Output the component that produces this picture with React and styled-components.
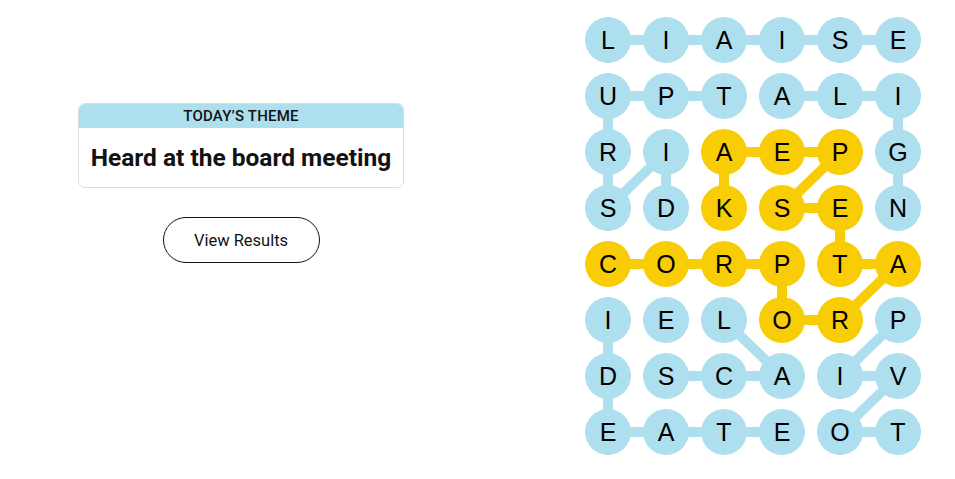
import styled, { createGlobalStyle } from "styled-components";

const GlobalStyle = createGlobalStyle`
  html, body {
    margin: 0;
    padding: 0;
    background: #ffffff;
  }
  body {
    font-family: "Liberation Sans", Arial, sans-serif;
    color: #121212;
  }
`;

const BLUE = "#aedfee";
const YELLOW = "#f9cd05";
const CELL = 46;
const COL_GAP = 12;
const ROW_GAP = 10;

const board = [
  "LIAISE",
  "UPTALI",
  "RIAEPG",
  "SDKSEN",
  "CORPTA",
  "IELORP",
  "DSCAIV",
  "EATEOT",
];

// cells found as part of the spangram
const found = new Set(["2-2", "2-3", "2-4", "3-2", "3-3", "3-4", "4-0", "4-1", "4-2", "4-3", "4-4", "4-5", "5-3", "5-4"]);

// [r1, c1, r2, c2]
const links = [
  [0, 0, 0, 1], [0, 1, 0, 2], [0, 2, 0, 3], [0, 3, 0, 4], [0, 4, 0, 5],
  [1, 0, 1, 1], [1, 1, 1, 2], [1, 3, 1, 4], [1, 4, 1, 5],
  [1, 0, 2, 0], [2, 0, 3, 0], [3, 0, 2, 1], [2, 1, 3, 1],
  [1, 5, 2, 5], [2, 5, 3, 5],
  [2, 2, 2, 3], [2, 3, 2, 4], [2, 2, 3, 2], [2, 4, 3, 3], [3, 3, 3, 4], [3, 4, 4, 4],
  [4, 0, 4, 1], [4, 1, 4, 2], [4, 2, 4, 3], [4, 4, 4, 5],
  [4, 3, 5, 3], [5, 3, 5, 4], [5, 4, 4, 5],
  [5, 0, 6, 0], [6, 0, 7, 0], [7, 0, 7, 1], [7, 1, 7, 2], [7, 2, 7, 3],
  [5, 2, 6, 3], [6, 1, 6, 2], [6, 2, 6, 3],
  [5, 5, 6, 4], [6, 4, 6, 5], [6, 5, 7, 4], [7, 4, 7, 5],
];

const cx = (c) => c * (CELL + COL_GAP) + CELL / 2;
const cy = (r) => r * (CELL + ROW_GAP) + CELL / 2;

const BOARD_W = 6 * CELL + 5 * COL_GAP;
const BOARD_H = 8 * CELL + 7 * ROW_GAP;

export default function App() {
  return (
    <>
      <GlobalStyle />
      <Page>
        <SidePanel>
          <ThemeCard>
            <ThemeHeader>TODAY’S THEME</ThemeHeader>
            <ThemeBody>Heard at the board meeting</ThemeBody>
          </ThemeCard>
          <ResultsButton>View Results</ResultsButton>
        </SidePanel>
        <BoardArea>
          <Board>
            <Links width={BOARD_W} height={BOARD_H} viewBox={`0 0 ${BOARD_W} ${BOARD_H}`}>
              {links.map(([r1, c1, r2, c2], i) => (
                <line
                  key={i}
                  x1={cx(c1)}
                  y1={cy(r1)}
                  x2={cx(c2)}
                  y2={cy(r2)}
                  stroke={found.has(`${r1}-${c1}`) ? YELLOW : BLUE}
                  strokeWidth="10"
                />
              ))}
            </Links>
            {board.map((row, r) =>
              row.split("").map((ch, c) => (
                <Letter key={`${r}-${c}`} $found={found.has(`${r}-${c}`)}>
                  {ch}
                </Letter>
              ))
            )}
          </Board>
        </BoardArea>
      </Page>
    </>
  );
}

const Page = styled.div`
  display: flex;
  width: 955px;
  height: 479px;
`;

// LEFT
const SidePanel = styled.div`
  flex: 0 0 482px;
  display: flex;
  flex-direction: column;
  align-items: center;
  padding-top: 103px;
  box-sizing: border-box;
`;

const ThemeCard = styled.div`
  width: 326px;
  border: 1px solid #dcdcdc;
  border-radius: 7px;
  overflow: hidden;
  box-sizing: border-box;
`;

const ThemeHeader = styled.div`
  background: ${BLUE};
  height: 24px;
  display: flex;
  align-items: center;
  justify-content: center;
  font-family: Roboto, "Liberation Sans", sans-serif;
  font-size: 15px;
  font-weight: 500;
  letter-spacing: 0.2px;
  color: #121212;
`;

const ThemeBody = styled.div`
  height: 59px;
  display: flex;
  align-items: center;
  justify-content: center;
  font-family: Roboto, "Liberation Sans", sans-serif;
  font-size: 24.5px;
  font-weight: 700;
  color: #121212;
`;

const ResultsButton = styled.button`
  margin-top: 29px;
  width: 157px;
  height: 46px;
  border: 1px solid #121212;
  border-radius: 23px;
  background: #ffffff;
  font-family: Roboto, "Liberation Sans", sans-serif;
  font-size: 16.5px;
  color: #121212;
  cursor: pointer;
`;

// RIGHT
const BoardArea = styled.div`
  flex: 1;
  padding: 17px 0 0 103px;
`;

const Board = styled.div`
  position: relative;
  width: ${BOARD_W}px;
  display: grid;
  grid-template-columns: repeat(6, ${CELL}px);
  grid-auto-rows: ${CELL}px;
  column-gap: ${COL_GAP}px;
  row-gap: ${ROW_GAP}px;
`;

const Links = styled.svg`
  position: absolute;
  left: 0;
  top: 0;
`;

const Letter = styled.div`
  position: relative;
  width: ${CELL}px;
  height: ${CELL}px;
  border-radius: 50%;
  background: ${(p) => (p.$found ? YELLOW : BLUE)};
  display: flex;
  align-items: center;
  justify-content: center;
  font-family: "Liberation Sans", Arial, sans-serif;
  font-size: 25px;
  color: #000000;
`;
